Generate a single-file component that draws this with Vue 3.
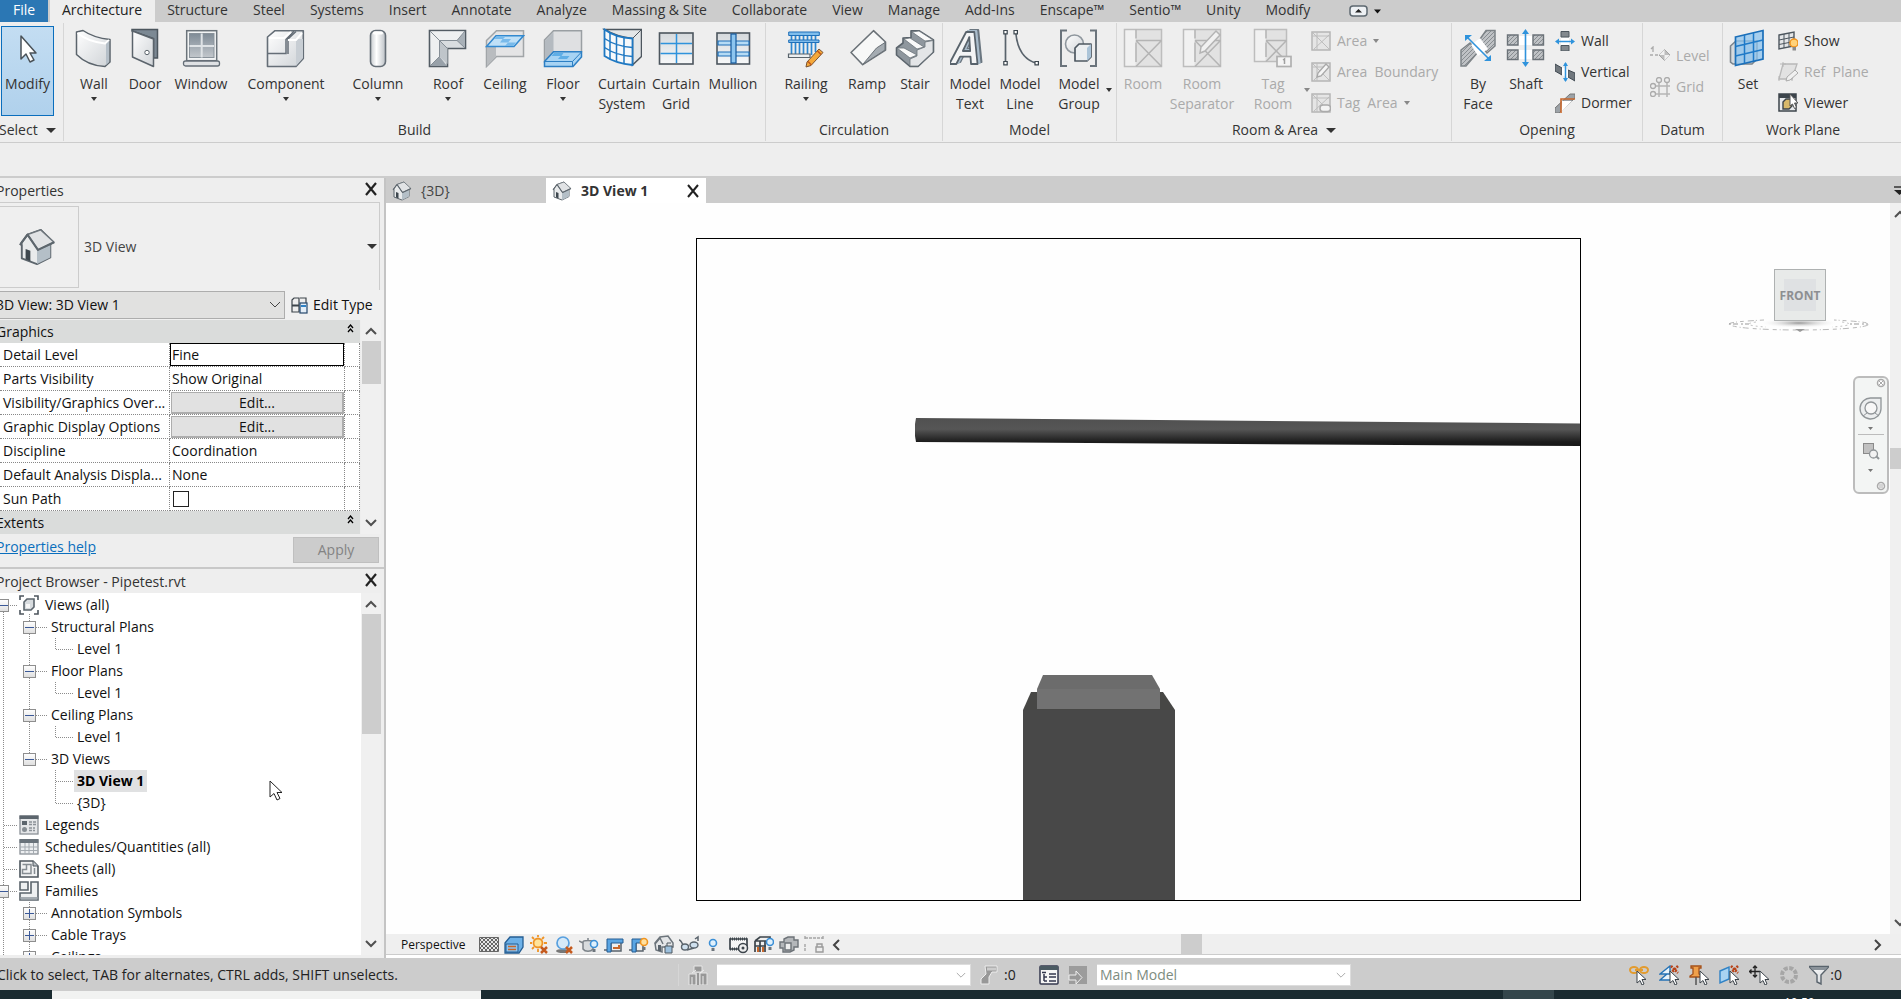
<script setup>
import { ref } from 'vue'

const tabs = ['Architecture', 'Structure', 'Steel', 'Systems', 'Insert', 'Annotate', 'Analyze', 'Massing & Site', 'Collaborate', 'View', 'Manage', 'Add-Ins', 'Enscape™', 'Sentio™', 'Unity', 'Modify']

const pencil = (c1, c2, dk) => `<path d="M33 21l4 3.500-12 13-5 1.500 1-5z" fill="${c1}" stroke="${dk}"/><path d="M31.500 23l3.500 3.500M22 33.500l3.500 3.500" stroke="${c2}" stroke-width="1.500"/>`

const roomBase = (x, y, w) => `<rect x="${x}" y="${y}" width="${w}" height="${w}" fill="#e2e2e2" stroke="#bdbdbd" stroke-width="1.500"/>
<rect x="${x + 1}" y="${y + 1}" width="10" height="${w - 2}" fill="#f1f1f1"/>
<path d="M${x + 11.5} ${y}V${y + 9}M${x + 11.5} ${y + 13}V${w - 3}M${x + 11.5} ${y + 11}H${x + w}M${x + 11.5} ${y + 11}L${x + w} ${y + w}M${x + w} ${y + 11}L${x + 11.5} ${y + w}" fill="none" stroke="#b4b4b4" stroke-width="1.500"/>`

const icons = {
  modify: '<path d="M13 8v23l5-5 4 8 4-2-4-7h6z" fill="#fff" stroke="#4a5258" stroke-width="1.500" stroke-linejoin="round"/>',
  wall: '<path d="M2.500 4L9 2.500C17 8 26 10.500 36 11.500V34L31 38.500C19 38 9 33 2.500 26.500Z" fill="url(#gMetal)" stroke="#5b646c" stroke-width="1.500" stroke-linejoin="round"/><path d="M3.500 5C12 12 21 14.500 31 15.500L35 12" fill="none" stroke="#fff" stroke-width="2"/><path d="M32 16l3-3v21l-3 3z" fill="#b5bfc8"/>',
  door: '<path d="M7 1.500H32.500V30H28.500V10.500L7 3Z" fill="#7c8994" stroke="#4c565e" stroke-width="1.500"/><path d="M7.500 3L28.500 11V38.500L7.500 29Z" fill="url(#gMetal)" stroke="#5b646c" stroke-width="1.500" stroke-linejoin="round"/><circle cx="22" cy="24.500" r="2.200" fill="#fff" stroke="#5b646c"/>',
  window: '<rect x="5.700" y="2.700" width="30" height="30" fill="#f2f4f5" stroke="#6b737a" stroke-width="1.500"/><rect x="8.500" y="5.500" width="24.500" height="24" fill="url(#gGlass)" stroke="#89929a"/><path d="M20.700 5.500V29.500M8.500 18H33" stroke="#dfe3e6" stroke-width="2"/><rect x="2.500" y="33" width="36" height="5" rx="2" fill="#dfe1e4" stroke="#656e77" stroke-width="1.300"/>',
  component: '<path d="M1.500 9L9 2.700H37.300V30.500L30 38.500H1.500Z" fill="url(#gMetal)" stroke="#656e77" stroke-width="1.600" stroke-linejoin="round"/><path d="M30 11h7v19l-7 8z" fill="#c8ced4"/><path d="M1.500 25.500H20V11.500L28 3M22 26V11L30 3.500" fill="none" stroke="#656e77" stroke-width="1.500"/><path d="M3 10H18L25 4M22 12H30L36 5" stroke="#fff" stroke-width="2" fill="none"/>',
  column: '<rect x="12.500" y="2.500" width="15" height="36" rx="5" fill="url(#gCol)" stroke="#656e77" stroke-width="1.600"/><rect x="15" y="3.500" width="10" height="3" rx="1.500" fill="#fff"/>',
  roof: '<path d="M1.500 2.500H37.500V20.500H19.500V38.500H1.500Z" fill="#d9dde0" stroke="#535c64" stroke-width="1.600"/><path d="M2.500 3.500H36L29 12.500H11.500V28.500L3 37Z" fill="#eef0f1"/><path d="M37 3.500V20L29 12.500Z" fill="#a9b1b8"/><path d="M2 38H19L11.500 28.500Z" fill="#98a1a9"/><path d="M11.500 12.500L19.500 20.500V36L11.500 28.500Z" fill="#bfc5ca"/><path d="M2 3L19.500 20.500M11.500 29V12.500H29L37 3M29 12.500l8 7.500M11.500 28.500L2 38" fill="none" stroke="#858e96"/>',
  ceiling: '<path d="M1.500 12.500L11.500 2.700H38.500V28.500H11.500L1.500 38.500Z" fill="#e4e4e5" stroke="#a1a5a8" stroke-width="1.500"/><path d="M2 19L11 10V28.500L2 38Z" fill="#b9bcbf"/><path d="M1.500 18.500L11 7.700H38.500L29 18.500Z" fill="#bfe0f7" stroke="#3289cf" stroke-width="1.500"/><path d="M12 8l-2.500 3h8l-2.500 3.500h8l-3 3.500h8l3-3.500h-8l3-3.500h-8l3-3z" fill="#78baeb"/>',
  floor: '<path d="M1.500 12L10.500 2.700H38.500V24L30 34H1.500Z" fill="#dfe0e2" stroke="#9a9fa3" stroke-width="1.500"/><path d="M2 12.500L10.500 4V25L2 33Z" fill="#b4bac0"/><path d="M1.500 33.500L10.500 23.700H38.500V29L30 38.500H1.500Z" fill="#a7d3f3" stroke="#2c7fc4" stroke-width="1.500"/><path d="M1.500 33.500H29.500L38.500 24M29.500 33.500V38" fill="none" stroke="#2c7fc4"/><path d="M11 25l-2.500 3h9l-2.500 3h9l2.500-3h-8l2-3z" fill="#5faee6"/>',
  cursys: '<path d="M2.500 1.500H39.500V28.500L30.500 37V10.500C20 9.500 10 6 2.500 1.500Z" fill="#e3e6e8" stroke="#4d565e" stroke-width="1.500"/><path d="M2.500 1.500C10 7 20 10 30.500 10.500V37C19 36 10 33 2.500 28Z" fill="#f6f9fb" stroke="#1f78c2" stroke-width="1.800"/><path d="M2.500 10.500C10 15.500 20 19 30.500 19.500M2.500 19.500C10 24.500 20 28 30.500 28.500M8 5V31.500M14.500 8V34M22 10V36" fill="none" stroke="#1f78c2" stroke-width="1.500"/><path d="M31 10L39 2" stroke="#4d565e"/>',
  curgrid: '<rect x="3.500" y="5" width="33.500" height="31" fill="url(#gGrid)" stroke="#4d565e" stroke-width="1.600"/><path d="M20.500 6V35M4.500 15.500H36M4.500 25.500H36" stroke="#2f93dc" stroke-width="1.500"/>',
  mullion: '<rect x="4" y="5" width="32.500" height="31" fill="url(#gGrid)" stroke="#4d565e" stroke-width="1.600"/><path d="M5 13H36V17H5ZM5 24H36V28H5Z" fill="#b5dbf5" stroke="#1f6fb8" stroke-width="1.200"/><rect x="18" y="6" width="5" height="29" fill="#8cc5ef" stroke="#14599c" stroke-width="1.200"/>',
  railing: '<path d="M5.500 5V27M9.500 5V27M13.500 5V27M17.500 5V27M21.500 5V27M25.500 5V27M29.500 5V24" stroke="#2c86cf" stroke-width="1.700"/><path d="M2.700 4H33.300V7.500H2.700ZM2.700 12H33V14.500H2.700Z" fill="#7fbdec" stroke="#1f6fb8"/><path d="M2.500 26H24V29.500H2.500Z" fill="#eceff1" stroke="#59636b" stroke-width="1.200"/>' + pencil('#f5a93a', '#c2571a', '#7a5230'),
  ramp: '<path d="M4 24.500L26.500 2.700L38.500 14V22L15.700 36.700Z" fill="#f7f8f8" stroke="#6b7278" stroke-width="1.600" stroke-linejoin="round"/><path d="M15.700 36.500L29.500 20L38 14.500V22Z" fill="#a5acb2" stroke="#6b7278"/>',
  stair: '<path d="M1.500 20L8 15V10L16 9.500V2.700H24L38.500 12V24L23 38.500H15L1.500 27Z" fill="#8f979e" stroke="#5b646c" stroke-width="1.600" stroke-linejoin="round"/><path d="M2 20H9L22 27L15 30ZM9 11L15 10L29 19L22 21ZM17 4L24 3L38 12L30 13Z" fill="#fafafa" stroke="#6b737a" stroke-width=".8"/><path d="M15 31L22 28V22L30 19V14L38 12.500V24L23 38H15Z" fill="#e3e5e7" stroke="#6b737a" stroke-width=".8"/>',
  mtext: '<text x="2" y="36" filter="url(#extrude)" font-family="Open Sans" font-weight="bold" font-style="italic" font-size="45" fill="#f3f4f5" stroke="#59636c" stroke-width="1.800" stroke-linejoin="round">A</text>',
  mline: '<path d="M5.500 4V35.500M15.700 4C17 20 24 32 37 35.500" fill="none" stroke="#59636c" stroke-width="1.700"/><path d="M3.800 2.500h3.400v3.400H3.800zM3.800 33.500h3.400v3.400H3.800zM14 2.500h3.400v3.400H14zM35 33.500h3.400v3.400H35z" fill="#fff" stroke="#3d474f" stroke-width="1.200"/>',
  mgroup: '<path d="M8 2.500H2V38H8M31 2.500H37V38H31" fill="none" stroke="#6b747c" stroke-width="2"/><circle cx="15.500" cy="16" r="9" fill="url(#gMetal)" stroke="#8f979e" stroke-width="1.600"/><path d="M16 20L20 16H32V29L28 33H16Z" fill="#eceff1" stroke="#4f5962" stroke-width="1.700" stroke-linejoin="round"/><path d="M28 20L32 16V29L28 33Z" fill="#abc4d8"/>',
  room: roomBase(1.5, 1.5, 37),
  roomsep: roomBase(1.5, 1.5, 37) + '<path d="M34 3l4 4-15 16-5 2 1-6z" fill="#f1f1f1" stroke="#b4b4b4" stroke-width="1.500"/>',
  tagroom: roomBase(1.5, 1.5, 32) + '<rect x="24" y="28.500" width="14" height="10" fill="#f4f4f4" stroke="#b0b0b0" stroke-width="1.700"/><path d="M30 32l1.500-1v5" fill="none" stroke="#a0a0a0" stroke-width="1.500"/>',
  byface: '<path d="M3 38V22L12 15L20 24L8 38Z M20 14L28 2.500H37V18L29 25Z" fill="url(#hatch)" stroke="#7e8488" stroke-width="1.500"/><path d="M13 17L22 10L30 21L20 28Z" fill="#fff"/><path d="M9 9L32 32" stroke="#2f93dc" stroke-width="1.600"/><path d="M7 7h7l-7 6zM33 33h-7l7-6z" fill="#2f93dc"/>',
  shaft: '<path d="M1.500 7H12V17H1.500ZM27 7H37.500V17H27ZM1.500 22H12V31.500H1.500ZM27 22H37.500V31.500H27Z" fill="url(#hatch)" stroke="#6b7278" stroke-width="1.400"/><path d="M13 8H26V17H13ZM13 22H26V31H13Z" fill="#fff"/><path d="M19.500 4V36" stroke="#2f93dc" stroke-width="1.600"/><path d="M16 6l3.500-5 3.500 5zM16 34l3.500 5 3.500-5z" fill="#2f93dc"/>',
  set: '<path d="M2.500 18L8 13H29V31L24 36H5L2.500 34Z" fill="#d6dadd" stroke="#7c858d" stroke-width="1.600"/><path d="M7.500 9L35 2.500V31L7.500 37.500Z" fill="#8cc3ee" fill-opacity=".75" stroke="#1b6fb9" stroke-width="1.700"/><path d="M16.500 7V35M25.500 5V33M7.500 18.500L35 12M7.500 28L35 21.500" stroke="#1f7ac8" stroke-width="1.500"/>',
}

const area = '<rect x="1" y="1" width="18" height="18" fill="#e5e5e5" stroke="#b5b5b5" stroke-width="1.500"/><path d="M6 1V19M1 5H19M2 2L18 18M18 4L3 18" stroke="#bdbdbd" fill="none"/>'
const small = {
  area,
  areab: area + '<path d="M15 2l3 3-8 9-4 1 1-4z" fill="#f5f5f5" stroke="#a8a8a8" stroke-width="1.300"/>',
  taga: area + '<rect x="9" y="12" width="10.500" height="6.500" rx="3" fill="#f4f4f4" stroke="#ababab" stroke-width="1.500"/>',
  wall: '<path d="M6 0.500H14V6H6ZM6 14.500H14V20H6Z" fill="#83898e" stroke="#4d565e"/><path d="M6 7H14V14H6Z" fill="#fff"/><path d="M3 10.500H17" stroke="#2f93dc" stroke-width="1.500"/><path d="M4 7.500L0 10.500l4 3zM16 7.500l4 3-4 3z" fill="#2f93dc"/>',
  vertical: '<path d="M0 2L7 6V13L0 9ZM13 8L20 11V19L13 15Z" fill="#70777d" stroke="#3f4850"/><path d="M7 5l6 3v8l-6-3z" fill="#fff"/><path d="M10.500 1V19" stroke="#2f93dc" stroke-width="1.500"/><path d="M8 4l2.500-4L13 4zM8 16l2.500 4 2.500-4z" fill="#2f93dc"/>',
  dormer: '<path d="M0 15L15 1H20V5L4 20H0Z" fill="#9ca2a7" stroke="#777"/><path d="M7 8H17L6 19z" fill="#fff"/><path d="M6 20V6H20" fill="none" stroke="#c8672b" stroke-width="1.600"/>',
  level: '<path d="M1 3l2-2v5M0 9h3M5 9h3" fill="none" stroke="#aaa" stroke-width="1.300"/><path d="M9 9H20" stroke="#bbb"/><path d="M14.500 3.500L20 9l-5.500 5.500L9 9z" fill="#bdbdbd" stroke="#a3a3a3"/><path d="M14.500 3.500V9H9zM14.500 14.500V9H20z" fill="#f1f1f1"/>',
  grid: '<path d="M9 5V20M17 5V20M5 9H20M5 17H20" stroke="#b5b5b5" stroke-width="1.500"/><g fill="#eee" stroke="#ababab" stroke-width="1.300"><circle cx="9" cy="3" r="2.500"/><circle cx="17" cy="3" r="2.500"/><circle cx="3" cy="9" r="2.500"/><circle cx="3" cy="17" r="2.500"/></g>',
  show: '<path d="M1 4L16 1V15L1 18Z" fill="#e4e6e8" stroke="#4d565e" stroke-width="1.400"/><path d="M6 3V17M11 2V16M1 9L16 6M1 13.500L16 10.500" stroke="#4d565e"/><circle cx="16" cy="12" r="4" fill="#ffd27a" stroke="#f0941f" stroke-width="1.500"/><rect x="14.500" y="16" width="3.500" height="3.500" fill="#8a8a8a"/>',
  ref: '<path d="M5 2H19L14 17H1Z" fill="#e2e2e2" stroke="#b8b8b8" stroke-width="1.300"/><path d="M5 0V5M2 2H8M14 13V19M1 14V19" stroke="#b8b8b8"/><path d="M17 8l3 3-8 7-4 1 1-4z" fill="#f0f0f0" stroke="#ababab"/>',
  viewer: '<rect x="1" y="1" width="17" height="17" fill="#e7e9eb" stroke="#3c444b" stroke-width="1.500"/><path d="M1 1H18V5H1Z" fill="#3c444b"/><path d="M5 9L8 6H14V13L11 16H5Z" fill="#d8b96a" stroke="#3c444b" stroke-width="1.400"/><path d="M12 1V13l2.500-2 2 4.500 2-1-2-4.500H20z" fill="#fff" stroke="#555"/>',
}

const house = '<path d="M3.500 15.500L10 7L24 2L36 14L34 17V31L20 38L4 32V18Z" fill="#e9ebec" stroke="#5d666d" stroke-width="2" stroke-linejoin="round"/><path d="M20 23L34 17V31L20 38Z" fill="#b4bfc7"/><path d="M10 7L24 2L38 15L21 23Z" fill="#e1e3e5" stroke="#6f777d" stroke-width="1.600" stroke-linejoin="round"/><path d="M2 18L10 7L21 23L38 15" fill="none" stroke="#5d666d" stroke-width="2.200" stroke-linejoin="round"/><path d="M8 22L13 24V35L8 33Z" fill="#3f484f"/>'

const panels = [
  { id: 'build', title: 'Build', tools: [
    { i: 'wall', t: ['Wall'], d: 1 }, { i: 'door', t: ['Door'] }, { i: 'window', t: ['Window'] }, { i: 'component', t: ['Component'], d: 1 },
    { i: 'column', t: ['Column'], d: 1 }, { i: 'roof', t: ['Roof'], d: 1 }, { i: 'ceiling', t: ['Ceiling'] }, { i: 'floor', t: ['Floor'], d: 1 },
    { i: 'cursys', t: ['Curtain', 'System'] }, { i: 'curgrid', t: ['Curtain', 'Grid'] }, { i: 'mullion', t: ['Mullion'] }] },
  { id: 'circ', title: 'Circulation', tools: [{ i: 'railing', t: ['Railing'], d: 1 }, { i: 'ramp', t: ['Ramp'] }, { i: 'stair', t: ['Stair'] }] },
  { id: 'model', title: 'Model', tools: [{ i: 'mtext', t: ['Model', 'Text'] }, { i: 'mline', t: ['Model', 'Line'] }, { i: 'mgroup', t: ['Model', 'Group'], side: 1 }] },
  { id: 'room', title: 'Room & Area', arrow: 1,
    tools: [{ i: 'room', t: ['Room'], off: 1 }, { i: 'roomsep', t: ['Room', 'Separator'], off: 1 }, { i: 'tagroom', t: ['Tag', 'Room'], off: 1, side: 1 }],
    list: [{ i: 'area', t: 'Area', off: 1, d: 1 }, { i: 'areab', t: 'Area  Boundary', off: 1 }, { i: 'taga', t: 'Tag  Area', off: 1, d: 1 }] },
  { id: 'opening', title: 'Opening', tools: [{ i: 'byface', t: ['By', 'Face'] }, { i: 'shaft', t: ['Shaft'] }],
    list: [{ i: 'wall', t: 'Wall' }, { i: 'vertical', t: 'Vertical' }, { i: 'dormer', t: 'Dormer' }] },
  { id: 'datum', title: 'Datum', tools: [], list: [{ i: 'level', t: 'Level', off: 1 }, { i: 'grid', t: 'Grid', off: 1 }] },
  { id: 'plane', title: 'Work Plane', tools: [{ i: 'set', t: ['Set'] }],
    list: [{ i: 'show', t: 'Show' }, { i: 'ref', t: 'Ref  Plane', off: 1 }, { i: 'viewer', t: 'Viewer' }] },
]

const props = [
  { n: 'Detail Level', v: 'Fine', k: 'input' }, { n: 'Parts Visibility', v: 'Show Original' },
  { n: 'Visibility/Graphics Over...', v: 'Edit...', k: 'button' }, { n: 'Graphic Display Options', v: 'Edit...', k: 'button' },
  { n: 'Discipline', v: 'Coordination' }, { n: 'Default Analysis Displa...', v: 'None' }, { n: 'Sun Path', k: 'check' },
]
const detail = ref('Fine')
const sun = ref(false)

const line = (d) => `<path d="${d}" fill="none" stroke="#8c8c8c" stroke-dasharray="1 1" shape-rendering="crispEdges"/>`
const box = (x, plus) => `<rect x="${x - 6}.500" y="5.500" width="12" height="12" fill="url(#gBox)" stroke="#8e8e8e"/><path d="M${x - 4} 11.500H${x + 5}${plus ? `M${x}.500 7V16` : ''}" stroke="#3b5998" fill="none"/>`
const root = line('M3.500 0V22')
const trunk = root + line('M29.500 0V22')
const parent = trunk + line('M30 11.500H48') + box(29)
const leaf = line('M55.500 0V11.500H74')
const tree = [
  { l: 0, t: 'Views (all)', i: 'views', g: line('M3.500 12V22M4 11.500H18M29.500 20V22') + box(3) },
  { l: 1, t: 'Structural Plans', g: parent }, { l: 2, t: 'Level 1', g: trunk + leaf },
  { l: 1, t: 'Floor Plans', g: parent }, { l: 2, t: 'Level 1', g: trunk + leaf },
  { l: 1, t: 'Ceiling Plans', g: parent }, { l: 2, t: 'Level 1', g: trunk + leaf },
  { l: 1, t: '3D Views', g: root + line('M29.500 0V11.500H48') + box(29) },
  { l: 2, t: '3D View 1', sel: 1, g: root + line('M55.500 0V22M56 11.500H74') }, { l: 2, t: '{3D}', g: root + leaf },
  { l: 0, t: 'Legends', i: 'legends', g: root + line('M4 11.500H18') },
  { l: 0, t: 'Schedules/Quantities (all)', i: 'sched', g: root + line('M4 11.500H18') },
  { l: 0, t: 'Sheets (all)', i: 'sheets', g: root + line('M4 11.500H18') },
  { l: 0, t: 'Families', i: 'families', g: root + line('M4 11.500H18') + box(3) },
  ...['Annotation Symbols', 'Cable Trays', 'Ceilings'].map(t => ({ l: 1, t, g: trunk + line('M30 11.500H48') + box(29, true) })),
]
const treeIcons = {
  views: '<path d="M1 5V1H5M15 1H19V5M19 15V19H15M5 19H1V15" fill="none" stroke="#4d565e" stroke-width="1.600"/><path d="M5 7L8 4H15V12L12 15H5Z" fill="#d8dcdf" stroke="#5b646c" stroke-width="1.600"/><path d="M7 9h4v4H7z" fill="#f7f7f7"/>',
  legends: '<rect x="1" y="1" width="18" height="18" fill="#e4e6e8" stroke="#8b9197" stroke-width="1.300"/><path d="M.500 .500H19.500V4H.500Z" fill="#5c656d"/><path d="M3 6h5v4H3z" fill="#5c656d"/><circle cx="5.500" cy="14.500" r="2.500" fill="#868d93"/><path d="M10 7h7M10 9.500h7M10 13h6M10 15.500h6" stroke="#8b9197" stroke-width="1.300" stroke-dasharray="3 1"/>',
  sched: '<rect x="1" y="3" width="18" height="14" fill="#eceef0" stroke="#8b9197" stroke-width="1.300"/><path d="M.500 2H19.500V6H.500Z" fill="#69727a"/><path d="M6 6V17M10 6V17M14.500 6V17M1 10H19M1 13.500H19" stroke="#a4aab0"/>',
  sheets: '<path d="M1 2H14L19 7V18H1Z" fill="#f1f2f3" stroke="#4d565e" stroke-width="1.600"/><path d="M14 2V7H19" fill="#bcc2c7" stroke="#4d565e"/><path d="M3.500 5.500H12V14.500H3.500V10.500H7.500V5.500M15.500 9V15" fill="none" stroke="#868d93" stroke-width="1.500"/>',
  families: '<path d="M1 1H9V9H1ZM12 1H19V19H1V12H12Z" fill="#eef0f1" stroke="#5b646c" stroke-width="1.600"/><path d="M1.500 16h17v2.500h-17z" fill="#a4abb1"/>',
}

const bulb = (x, y, c = '#3b8fd6', f = '#dff0fc') => `<circle cx="${x}" cy="${y}" r="3.500" fill="${f}" stroke="${c}" stroke-width="1.600"/><path d="M${x - 1.5} ${y + 5}h3v3h-3z" fill="#6d757c"/>`
const redx = '<path d="M12 12l6 6M18 12l-6 6" stroke="#c45a1e" stroke-width="2.500"/>'
const controls = [
  '<path d="M.500 2.500H19.500V16.500H.500Z" fill="url(#check)" stroke="#666"/>',
  '<path d="M1 8L6 2H19V12L15 18H1Z" fill="#6db1e8" stroke="#245d92" stroke-width="1.300"/><path d="M2 9H14V17H2Z" fill="#8fc5f0" stroke="#245d92"/><path d="M4 11.500H12M4 14.500H12" stroke="#c8672b" stroke-width="1.500"/>',
  '<circle cx="9" cy="8" r="4.500" fill="#ffe39a" stroke="#ef9426" stroke-width="1.800"/><path d="M9 0V2M1 8H3M3 2l2 2M15 2l-2 2M3 14l2-2M15 8h3M9 14v3" stroke="#ef9426" stroke-width="1.800"/>' + redx,
  '<ellipse cx="9" cy="16" rx="7" ry="2" fill="#777"/><circle cx="9" cy="8" r="6" fill="#d5e9f9" stroke="#58a0df" stroke-width="1.700"/>' + redx,
  '<path d="M4 7C4 5 14 5 14 7V14C12 17 6 17 4 14ZM4 8L0 6M9 3V5M14 8h3" fill="#d8dbdd" stroke="#7c8389" stroke-width="1.500"/>' + bulb(15, 9),
  '<path d="M0 15H5M7 7H17V16H7z" fill="#eee" stroke="#59636c" stroke-width="1.500"/><path d="M3 17V4H19V8H7V17Z" fill="#5aa5e3" stroke="#245d92"/><path d="M9 13H15V10" stroke="#c8672b" stroke-width="2" fill="none"/>',
  '<path d="M0 15H5M7 7H14V16H7z" fill="#eee" stroke="#59636c" stroke-width="1.500"/><path d="M3 17V4H13V8H7V17Z" fill="#5aa5e3" stroke="#245d92"/>' + bulb(15, 7, '#f0941f', '#ffe0a0'),
  '<path d="M1 8L6 2L14 1L19 8V12H8V17L2 15Z" fill="#e4e6e8" stroke="#6d757c" stroke-width="1.500"/><path d="M1 9L6 3L9 9" fill="none" stroke="#6d757c" stroke-width="1.500"/><path d="M4 10h3v6H4z" fill="#59636c"/><path d="M11 11h7v7h-7z" fill="#9cc0dd" stroke="#4d565e"/><path d="M13 11V8h4" fill="none" stroke="#4d565e"/>',
  '<path d="M0 5C2 5 3 8 4 10M8 15l7-2M16 4l3-2v4" fill="none" stroke="#59636c" stroke-width="1.500"/><ellipse cx="6" cy="12" rx="3.500" ry="3" fill="#cfe0ee" stroke="#59636c" stroke-width="1.400"/><ellipse cx="15" cy="10" rx="4" ry="3" fill="#cfe0ee" stroke="#59636c" stroke-width="1.400"/>',
  bulb(9, 8),
  '<path d="M1 4H18V14H1Z" fill="#f7f7f7" stroke="#3c444b" stroke-width="1.700"/><path d="M1 4H18M1 14H10" stroke="#3c444b" stroke-width="3" stroke-dasharray="1 1"/><circle cx="14" cy="13" r="4.500" fill="#eee" stroke="#3c444b" stroke-width="1.500"/><circle cx="14" cy="13" r="1.500" fill="#3c444b"/>',
  '<path d="M1 6L6 2H16V8M1 6V17M6 6V17M11 6V17M1 6H12M1 11H12" fill="none" stroke="#3c444b" stroke-width="1.700"/><path d="M4 12V17M9 12v5" stroke="#c8672b" stroke-width="2"/>' + bulb(16, 7),
  '<path d="M1 7H5V4L9 2H15V5H19V12H15V15L11 17H4V13H1Z" fill="#b4b7ba" stroke="#6d7378" stroke-width="1.400"/><path d="M6 8H12V15H6Z" fill="#eee" stroke="#6d7378" stroke-width="1.400"/>',
  '<path d="M1 3H19M1 1V5M19 1V5M1 9V16" fill="none" stroke="#a5a5a5" stroke-width="1.400" stroke-dasharray="3 1"/><path d="M12 12H19V17H12ZM13 12V9H18V12" fill="#eee" stroke="#9b9b9b" stroke-width="1.400"/>',
]

const cur = '<path d="M11 6V18l3-2.500 2 4.500 2-1-2-4.500h4z" fill="#fff" stroke="#3c444b"/>'
const rx = '<path d="M12 1l7 7M19 1l-7 7" stroke="#b8441a" stroke-width="2.500" stroke-dasharray="2 1"/>'
const selIcons = [
  '<path d="M1 5a4 3 0 0 1 8 0a4 3 0 0 1-8 0M11 5a4 3 0 0 1 8 0a4 3 0 0 1-8 0M6 5h8" fill="none" stroke="#e39b2d" stroke-width="2"/><path d="M8 6V18l3-2.500 2 4.500 2-1-2-4.500h4z" fill="#fff" stroke="#3c444b"/>',
  '<path d="M1 9L11 1V9ZM1 15L8 9H13V15Z" fill="#e8f3fb" stroke="#2472b5" stroke-width="1.400"/>' + rx + cur,
  '<path d="M2 1H12V3H10V9L13 11V12H1V11L4 9V3H2Z" fill="#f0a04a" stroke="#a4501a" stroke-width="1.300"/><path d="M7 12V20" stroke="#555" stroke-width="1.500"/>' + cur,
  '<path d="M1 6L10 2V14L1 18Z" fill="#a8d3f2" stroke="#2f82c6" stroke-width="1.400"/>' + rx + cur,
  '<path d="M6 1V12M1 6.500H11M4 3l2-2 2 2M4 10l2 2 2-2M2.500 4.500l-2 2 2 2" fill="none" stroke="#222" stroke-width="1.300"/>' + cur,
  '<circle cx="10" cy="10" r="7" fill="none" stroke="#a6a6a6" stroke-width="4" stroke-dasharray="4 1.500"/>',
]
const peopleIcon = '<path d="M6 1h8v6H6zM1 9h7v11H1zM12 8h7v12h-7z" fill="#989898" stroke="#e6e6e6"/><path d="M9 8h2v12H9z" fill="#989898"/><path d="M4 8L8 5M12 8l4-3M4 12v8M15 11v9" stroke="#eee"/>'
</script>

<template>
  <div class="app">
    <svg class="defs" width="0" height="0" aria-hidden="true">
      <defs>
        <linearGradient id="gMetal" x1="0" y1="0" x2="1" y2="1"><stop offset="0" stop-color="#fff" /><stop offset="1" stop-color="#cfd3d7" /></linearGradient>
        <linearGradient id="gGlass" x1="0" y1="0" x2="0" y2="1"><stop offset="0" stop-color="#7f8b96" /><stop offset="1" stop-color="#c2c7cc" /></linearGradient>
        <linearGradient id="gCol"><stop offset="0" stop-color="#c7cbcf" /><stop offset=".4" stop-color="#fff" /><stop offset="1" stop-color="#bcc1c6" /></linearGradient>
        <linearGradient id="gGrid" x1="0" y1="0" x2="0" y2="1"><stop offset="0" stop-color="#d5d9dc" /><stop offset="1" stop-color="#f7f8f9" /></linearGradient>
        <linearGradient id="gBox" x1="0" y1="0" x2="0" y2="1"><stop offset="0" stop-color="#fff" /><stop offset="1" stop-color="#dedede" /></linearGradient>
        <linearGradient id="gPipe" x1="0" y1="0" x2="0" y2="1"><stop offset="0" stop-color="#505050" /><stop offset=".4" stop-color="#565656" /><stop offset=".85" stop-color="#1c1c1c" /><stop offset="1" stop-color="#161616" /></linearGradient>
        <filter id="extrude"><feDropShadow dx="2" dy="-1" stdDeviation="0" flood-color="#a9bccb" /><feDropShadow dx="2" dy="-1" stdDeviation="0" flood-color="#6b7680" /></filter>
        <pattern id="hatch" width="4" height="4" patternUnits="userSpaceOnUse"><rect width="4" height="4" fill="#bfc2c5" /><path d="M0 4L4 0" stroke="#888d91" /></pattern>
        <pattern id="check" width="4" height="4" patternUnits="userSpaceOnUse"><rect width="4" height="4" fill="#e6e6e6" /><path d="M0 0h2v2H0zM2 2h2v2H2z" fill="#666" /></pattern>
      </defs>
    </svg>

    <nav class="tabs">
      <button class="file">File</button>
      <button v-for="(t, n) in tabs" :key="t" class="tab" :class="{ on: n === 0 }">{{ t }}</button>
      <button class="toggle" aria-label="Minimize ribbon">
        <svg width="32" height="12" viewBox="0 0 32 12"><rect x="1" y="1" width="17" height="10" rx="3" fill="#eef1f4" stroke="#5d6870" stroke-width="1.500" /><path d="M6 7.500h7L9.500 4z" fill="#222" /><path d="M25 4.500h7l-3.500 4z" fill="#111" /></svg>
      </button>
    </nav>

    <header class="ribbon">
      <section class="panel select">
        <div class="tools">
          <button class="tool modify"><svg class="ico" viewBox="0 0 40 40" v-html="icons.modify" /><span>Modify</span></button>
        </div>
        <h2>Select <i class="tri big" /></h2>
      </section>
      <section v-for="p in panels" :key="p.id" class="panel" :class="p.id">
        <div class="tools">
          <button v-for="b in p.tools" :key="b.i" class="tool" :class="{ off: b.off }">
            <svg class="ico" viewBox="0 0 40 40" v-html="icons[b.i]" />
            <span v-for="w in b.t" :key="w">{{ w }}</span>
            <i v-if="b.d" class="tri" />
            <i v-if="b.side" class="tri side" />
          </button>
          <div v-if="p.list" class="list">
            <button v-for="b in p.list" :key="b.t" class="row" :class="{ off: b.off }">
              <svg width="20" height="20" viewBox="0 0 20 20" v-html="small[b.i]" /><span>{{ b.t }}</span><i v-if="b.d" class="tri" />
            </button>
          </div>
        </div>
        <h2>{{ p.title }} <i v-if="p.arrow" class="tri big" /></h2>
      </section>
    </header>

    <main class="work">
      <aside class="dock">
        <section class="properties">
          <div class="head"><h3>Properties</h3>
            <button class="x" aria-label="Close properties"><svg width="14" height="14" viewBox="0 0 14 14"><path d="M2 1l10 12M12 1L2 13" stroke="#222" stroke-width="2.200" /></svg></button>
          </div>
          <div class="type">
            <div class="thumb"><svg width="38" height="38" viewBox="0 0 40 40" v-html="house" /></div>
            <span>3D View</span><i class="tri big" />
          </div>
          <div class="inst">
            <div class="combo">
              <select aria-label="Instance"><option>3D View: 3D View 1</option></select>
              <svg class="chev" width="12" height="8" viewBox="0 0 12 8"><path d="M1 1l5 5 5-5" fill="none" stroke="#444" /></svg>
            </div>
            <button class="edit-type"><svg width="17" height="17" viewBox="0 0 17 17"><path d="M1 3L3 1H8V8H1ZM9 1H15V8H9M1 9H8V15H1Z" fill="#eee" stroke="#3c444b" stroke-width="1.200" /><rect x="9" y="6" width="7" height="10" fill="#e4eef7" stroke="#24476b" stroke-width="1.200" /><path d="M10 9h5" stroke="#2f82c6" stroke-width="2" /></svg>Edit Type</button>
          </div>
          <div class="grid-wrap">
            <div class="grid">
              <div class="group">Graphics <svg width="7" height="9" viewBox="0 0 7 9"><path d="M1 4l2.500-3L6 4M1 8l2.500-3L6 8" fill="none" stroke="#000" stroke-width="1.300" /></svg></div>
              <table>
                <tbody>
                  <tr v-for="r in props" :key="r.n">
                    <th scope="row">{{ r.n }}</th>
                    <td :class="{ edit: r.k }">
                      <input v-if="r.k === 'input'" v-model="detail" type="text" :aria-label="r.n">
                      <button v-else-if="r.k === 'button'" :aria-label="r.n">{{ r.v }}</button>
                      <input v-else-if="r.k === 'check'" v-model="sun" type="checkbox" :aria-label="r.n">
                      <template v-else>{{ r.v }}</template>
                    </td>
                    <td class="end" />
                  </tr>
                </tbody>
              </table>
              <div class="group last">Extents <svg width="7" height="9" viewBox="0 0 7 9"><path d="M1 4l2.500-3L6 4M1 8l2.500-3L6 8" fill="none" stroke="#000" stroke-width="1.300" /></svg></div>
            </div>
            <div class="vbar">
              <svg width="12" height="8" viewBox="0 0 12 8"><path d="M1 7l5-5 5 5" fill="none" stroke="#505050" stroke-width="2" /></svg>
              <div class="thumb-v" />
              <svg width="12" height="8" viewBox="0 0 12 8"><path d="M1 1l5 5 5-5" fill="none" stroke="#505050" stroke-width="2" /></svg>
            </div>
          </div>
          <div class="foot"><a href="#help">Properties help</a><button disabled>Apply</button></div>
        </section>

        <section class="browser">
          <div class="head"><h3>Project Browser - Pipetest.rvt</h3>
            <button class="x" aria-label="Close browser"><svg width="14" height="14" viewBox="0 0 14 14"><path d="M2 1l10 12M12 1L2 13" stroke="#222" stroke-width="2.200" /></svg></button>
          </div>
          <div class="tree-wrap">
            <ul class="tree">
              <li v-for="(r, n) in tree" :key="n" :class="['l' + r.l, { sel: r.sel }]">
                <svg class="gutter" width="76" height="22" v-html="r.g" />
                <svg v-if="r.i" class="ti" width="20" height="20" viewBox="0 0 20 20" v-html="treeIcons[r.i]" />
                <span>{{ r.t }}</span>
              </li>
            </ul>
            <div class="vbar long">
              <svg width="12" height="8" viewBox="0 0 12 8"><path d="M1 7l5-5 5 5" fill="none" stroke="#505050" stroke-width="2" /></svg>
              <div class="thumb-v" />
              <svg width="12" height="8" viewBox="0 0 12 8"><path d="M1 1l5 5 5-5" fill="none" stroke="#505050" stroke-width="2" /></svg>
            </div>
          </div>
          <svg class="pointer" width="14" height="22" viewBox="0 0 14 22"><path d="M1 1V17l4-3.500 3 6.500 3-1.500-3-6h5z" fill="#fff" stroke="#222" /></svg>
        </section>
      </aside>

      <section class="view">
        <div class="vtabs">
          <button class="vtab"><svg width="20" height="20" viewBox="0 0 40 40" v-html="house" /><span>{3D}</span></button>
          <button class="vtab on"><svg width="20" height="20" viewBox="0 0 40 40" v-html="house" /><span>3D View 1</span>
            <svg class="vx" width="14" height="14" viewBox="0 0 14 14"><path d="M2 1l10 12M12 1L2 13" stroke="#222" stroke-width="2" /></svg></button>
          <svg class="more" width="8" height="12" viewBox="0 0 8 12"><path d="M1 2H8" stroke="#333" stroke-width="1.500" /><path d="M1 5h11L6.500 10z" fill="#222" /></svg>
        </div>
        <div class="canvas-row">
          <div class="canvas">
            <svg class="scene" width="885" height="663" viewBox="0 0 885 663">
              <path d="M220 180L884 185.500V208L220 204L219 198V186Z" fill="url(#gPipe)" />
              <path d="M335 454H467L479 472V662H327V472Z" fill="#474745" />
              <path d="M327 472H479V662H327Z" fill="#484848" />
              <path d="M347 437H456L464 451H341Z" fill="#6c6c6c" />
              <path d="M341 451H464V471H341Z" fill="#727272" />
              <rect x=".5" y=".5" width="884" height="662" fill="none" stroke="#000" />
            </svg>
            <svg class="cube" width="146" height="68" viewBox="0 0 146 68">
              <defs><radialGradient id="gSh"><stop offset="0" stop-color="#999" /><stop offset="1" stop-color="#fff" stop-opacity="0" /></radialGradient></defs>
              <path d="M38 52C20 53 4 54 3 56C4 60 40 62 73 62S142 60 143 56C142 54 126 53 108 52" fill="none" stroke="#b8b8b8" stroke-dasharray="4 3 1 2 6 4" />
              <path d="M30 54C16 56 24 58 40 59M116 54C130 56 122 58 106 59" fill="none" stroke="#c4c4c4" stroke-dasharray="2 3" />
              <path d="M3 56h20M124 56h18" stroke="#999" stroke-dasharray="2 2 5 3" />
              <path d="M69 61l5 3 5-3z" fill="#999" />
              <ellipse cx="73" cy="55" rx="40" ry="5" fill="url(#gSh)" />
              <rect x="48.500" y="1.500" width="51" height="51" fill="#e8eae9" stroke="#aeb1b1" />
              <rect x="58" y="11" width="32" height="32" fill="#dfe1e3" />
              <text x="74" y="32" text-anchor="middle">FRONT</text>
            </svg>
            <svg class="navbar" width="36" height="118" viewBox="0 0 36 118">
              <rect x="1" y="1" width="34" height="116" rx="5" fill="#f3f5f4" stroke="#bcbcbc" stroke-width="2" />
              <circle cx="28" cy="7" r="3.500" fill="#fff" stroke="#aaa" stroke-width="1.500" /><path d="M26 5l4 4M30 5l-4 4" stroke="#aaa" />
              <path d="M18 22H28V33a10.500 10.500 0 1 1-10-11Z" fill="#eceeef" stroke="#909598" stroke-width="1.300" /><circle cx="18" cy="32" r="6" fill="#f7f7f7" stroke="#909598" stroke-width="1.300" /><path d="M14 37l-4 3M22 37l4 3" stroke="#909598" />
              <path d="M15 51h5l-2.500 3zM15 93h5l-2.500 3z" fill="#777" /><path d="M5 58.500H31" stroke="#bcbcbc" />
              <rect x="10.500" y="67.500" width="10" height="10" fill="#c1c1c1" stroke="#8a8a8a" /><circle cx="20.500" cy="78" r="4" fill="#f2f2f2" stroke="#909598" stroke-width="1.300" /><path d="M23 80l3 3" stroke="#909598" stroke-width="2" />
              <circle cx="28" cy="110" r="3.500" fill="#fff" stroke="#aaa" stroke-width="1.500" /><path d="M25.500 109h5M26 111h4" stroke="#aaa" />
            </svg>
          </div>
          <div class="vbar edge">
            <svg width="12" height="8" viewBox="0 0 12 8"><path d="M1 7l5-5 5 5" fill="none" stroke="#505050" stroke-width="2" /></svg>
            <div class="thumb-v" />
            <svg width="12" height="8" viewBox="0 0 12 8"><path d="M1 1l5 5 5-5" fill="none" stroke="#505050" stroke-width="2" /></svg>
          </div>
        </div>
        <div class="controls">
          <span>Perspective</span>
          <div class="cicons">
            <button v-for="(c, n) in controls" :key="n" :aria-label="'View control ' + (n + 1)"><svg width="20" height="20" viewBox="0 0 20 20" v-html="c" /></button>
          </div>
          <div class="hbar">
            <svg width="8" height="12" viewBox="0 0 8 12"><path d="M7 1L2 6l5 5" fill="none" stroke="#444" stroke-width="2" /></svg>
            <div class="thumb-h" />
            <svg width="8" height="12" viewBox="0 0 8 12"><path d="M1 1l5 5-5 5" fill="none" stroke="#444" stroke-width="2" /></svg>
          </div>
        </div>
      </section>
    </main>

    <footer class="status">
      <p>Click to select, TAB for alternates, CTRL adds, SHIFT unselects.</p>
      <div class="mid">
        <svg width="20" height="20" viewBox="0 0 20 20" v-html="peopleIcon" />
        <div class="combo s"><select aria-label="Active workset" disabled><option /></select><svg class="chev" width="10" height="7" viewBox="0 0 12 8"><path d="M1 1l5 5 5-5" fill="none" stroke="#999" /></svg></div>
        <div class="count"><svg width="18" height="20" viewBox="0 0 18 20"><path d="M5 1H17V7H12L9 12V19H1V14L6 9Z" fill="#989898" stroke="#eee" /><path d="M7 2.500h9v3H7z" fill="#ccc" /></svg><span>:0</span></div>
        <svg width="20" height="20" viewBox="0 0 20 20"><rect x="1" y="1" width="18" height="18" rx="1" fill="#f5f5f5" stroke="#33374d" stroke-width="1.500" /><path d="M1 1H19V5H1Z" fill="#4a5a62" /><path d="M3 7.500h4M10 9h7M5 9v7M5 12h3M10 12h7M5 16h3M10 16h7" stroke="#33374d" stroke-width="1.500" fill="none" /></svg>
        <svg width="20" height="20" viewBox="0 0 20 20"><path d="M1 1H19V19H1Z" fill="#9c9c9c" /><path d="M1 10H8V6l6 6.500L8 19v-4H1Z" fill="#989898" stroke="#eee" /></svg>
        <div class="combo s"><select aria-label="Design option" disabled><option>Main Model</option></select><svg class="chev" width="10" height="7" viewBox="0 0 12 8"><path d="M1 1l5 5 5-5" fill="none" stroke="#999" /></svg></div>
      </div>
      <div class="sel-icons">
        <button v-for="(s, n) in selIcons" :key="n" :aria-label="'Selection option ' + (n + 1)"><svg width="20" height="20" viewBox="0 0 20 20" v-html="s" /></button>
        <svg width="20" height="20" viewBox="0 0 20 20"><path d="M0 1.500H20L12 10V19L8 17V10Z" fill="url(#gMetal)" stroke="#59636c" stroke-width="1.400" /><path d="M1 2h18l-3 3H4z" fill="#8a9299" /></svg><span>:0</span>
      </div>
    </footer>
    <div class="taskbar"><div class="search" /><div class="active" /><time>10:50</time></div>
  </div>
</template>

<style>
body { margin: 0; overflow: hidden; }
</style>

<style scoped>
.app { display: grid; grid-template-rows: 22px 121px 33px 1fr 32px 9px; grid-template-columns: 100%; height: 100vh; overflow: hidden; background: #eee; color: #333; font-family: "Open Sans", "Noto Sans", sans-serif; font-size: 14px; line-height: 20px; }
.app * { box-sizing: border-box; }
.defs { position: absolute; }
button { font: inherit; color: inherit; background: none; border: 0; padding: 0; margin: 0; }
h2, h3, p, ul { margin: 0; padding: 0; font: inherit; font-weight: 400; list-style: none; }
svg { display: block; flex: none; }

.tabs { display: flex; background: #ccc; grid-row: 1; overflow: hidden; }
.tabs button { height: 22px; line-height: 20px; padding: 0 13px 2px 12px; white-space: nowrap; flex: none; }
.tabs .file { background: #2b77b4; color: #fff; width: 48px; margin-right: 2px; text-align: center; padding: 0 8px 2px; }
.tabs .on { background: #eee; color: #222; }
.tabs .toggle { margin-left: 24px; padding: 4px 2px; }

.ribbon { grid-row: 2; display: flex; padding-top: 1px; border-bottom: 1px solid #ccc; }
.panel { display: flex; flex-direction: column; border-right: 1px solid #d6d6d6; height: 118px; flex: none; }
.tools { display: grid; grid-auto-flow: column; justify-content: start; height: 97px; padding-top: 3px; }
.select { width: 64px; }
.build .tools { grid-template-columns: 56px 46px 66px 104px 80px 60px 54px 62px 56px 52px 62px; padding-left: 2px; padding-right: 1px; }
.circ .tools { grid-template-columns: 74px 48px 48px; padding: 3px 3px 0 3px; }
.model .tools { grid-template-columns: 50px 50px 68px; padding: 3px 3px 0 2px; }
.room .tools { grid-template-columns: 52px 66px 76px 139px; padding-left: 0; padding-right: 1px; }
.opening .tools { grid-template-columns: 48px 48px 90px; padding: 3px 2px 0; }
.datum .tools { grid-template-columns: 79px; }
.plane .tools { grid-template-columns: 50px 110px; }
.plane { border-right: 0; }
.tool { position: relative; display: flex; flex-direction: column; align-items: center; padding-top: 2px; white-space: nowrap; }
.ico { width: 40px; height: 40px; margin-bottom: 6px; }
.off { color: #aaa; }
.modify { width: 53px; height: 90px; margin-left: 1px; border: 1px solid #0a6ebd; background: linear-gradient(#c3ddf2, #b0d1ec); padding-top: 1px; }
.panel h2 { text-align: center; line-height: 20px; display: flex; justify-content: center; align-items: center; gap: 8px; }
.select h2 { justify-content: flex-start; margin-left: -1px; }
.tri { width: 0; height: 0; border: 3px solid transparent; border-top: 4px solid #333; border-bottom: 0; flex: none; }
.tri.big { border-left-width: 5px; border-right-width: 5px; border-top-width: 5px; }
.off .tri { border-top-color: #888; }
.tool > .tri { margin-top: 3px; }
.tool > .side { position: absolute; right: 1px; top: 62px; margin: 0; }
.list { display: flex; flex-direction: column; margin-top: -1px; }
.list .row { display: flex; align-items: center; gap: 6px; height: 31px; white-space: pre; }
.opening .list { padding-left: 5px; }
.datum .list { padding: 15px 0 0 7px; }
.plane .list { padding-left: 5px; }

.work { grid-row: 4; display: flex; min-height: 0; border-top: 2px solid #ccc; }
.dock { width: 386px; flex: none; display: flex; flex-direction: column; border-right: 2px solid #c4c4c4; min-height: 0; color: #111; }
.head { display: flex; align-items: center; justify-content: space-between; height: 24px; padding: 1px 6px 0 0; color: #333; }
.head h3 { margin-left: -4px; }
.head .x { width: 14px; margin-top: -3px; }
.type { display: flex; align-items: center; height: 88px; margin-right: 4px; padding-right: 2px; border: solid #ccc; border-width: 1px 1px 0 0; color: #444; background: #efefef; }
.type .thumb { width: 79px; height: 82px; border: 1px solid #ccc; border-left: 0; display: grid; place-items: center; margin-right: 5px; padding-right: 4px; }
.type span { flex: 1; }
.inst { display: flex; align-items: center; height: 30px; background: #f0f0f0; }
.combo { position: relative; }
.combo select { appearance: none; font: inherit; color: #111; width: 100%; height: 100%; border: 1px solid #adadad; border-left: 0; border-radius: 0; background: #e1e1e0; padding: 0; text-indent: -4px; }
.combo .chev { position: absolute; right: 4px; top: 10px; }
.inst .combo { width: 285px; height: 28px; }
.edit-type { display: flex; align-items: center; gap: 5px; margin-left: 6px; }
.grid-wrap { display: flex; height: 214px; }
.grid { width: 360px; background: #fff; overflow: hidden; }
.group { height: 23px; background: #dadcdb; display: flex; justify-content: space-between; padding: 0 6px 0 0; text-indent: -4px; align-items: center; }
.group svg { margin-bottom: 6px; }
table { border-collapse: separate; border-spacing: 0; width: 360px; table-layout: fixed; }
tr { height: 24px; }
th, td { padding: 0 0 0 2px; height: 24px; font-weight: 400; text-align: left; border: dotted #888; border-width: 0 1px 1px 0; line-height: 20px; white-space: nowrap; overflow: hidden; }
th { width: 170px; padding-left: 3px; }
.end { width: 15px; }
.edit { padding: 0; }
td input[type="text"] { display: block; width: 174px; height: 23px; border: 1px solid #000; padding: 0 1px; font: inherit; color: #111; border-radius: 0; background: #fff; }
td button { display: block; width: 173px; height: 22px; margin: 1px 0 0 1px; background: #e1e1e1; border: 1px solid #adadad; border-width: 1px 2px 2px 1px; line-height: 19px; }
td input[type="checkbox"] { appearance: none; display: block; width: 16px; height: 16px; margin: 0 0 0 3px; border: 1px solid #222; background: #fff; }
.vbar { width: 20px; margin-left: 1px; display: flex; flex-direction: column; align-items: center; justify-content: space-between; padding: 7px 0; background: #f0f0f0; }
.thumb-v { width: 19px; height: 43px; background: #cdcdcd; margin: 6px 0 auto; }
.foot { display: flex; justify-content: space-between; align-items: center; padding: 2px 5px 4px 0; height: 33px; }
.foot a { color: #0a6ebd; margin: -6px 0 0 -4px; }
.foot button { width: 86px; height: 26px; border: 1px solid #bfbfbf; background: #ccc; color: #838383; }
.browser { position: relative; flex: 1; display: flex; flex-direction: column; min-height: 0; border-top: 2px solid #c8c8c8; border-bottom: 3px solid #eee; }
.tree-wrap { display: flex; flex: 1; min-height: 0; }
.tree { flex: 1; background: #fff; overflow: hidden; padding-top: 1px; }
.tree li { position: relative; height: 22px; line-height: 22px; display: flex; align-items: center; }
.gutter { position: absolute; left: 0; top: 0; }
.ti { margin: 0 6px 0 19px; z-index: 1; }
.l1 { padding-left: 51px; }
.l2 { padding-left: 74px; }
.l2 span { padding: 0 3px; z-index: 1; }
.sel span { font-weight: 700; background: #e0e1e2; color: #000; }
.long { margin: 0 3px 0 0; }
.long .thumb-v { height: 120px; }
.pointer { position: absolute; left: 269px; top: 211px; }

.view { flex: 1; min-width: 0; display: flex; flex-direction: column; background: #fff; }
.vtabs { display: flex; background: #ccc; height: 25px; }
.vtab { display: flex; align-items: center; gap: 9px; width: 160px; padding: 0 6px; color: #444; }
.vtab.on { background: #fff; font-weight: 700; color: #333; }
.vx { margin-left: auto; }
.more { margin: 7px 0 0 auto; }
.canvas-row { flex: 1; display: flex; min-height: 0; }
.canvas { position: relative; flex: 1; display: flex; align-items: center; justify-content: center; background: #fefefe; min-width: 0; padding-top: 2px; }
.cube { position: absolute; right: 18px; top: 65px; }
.cube text { font-size: 12px; font-weight: 700; fill: #8d8f92; }
.navbar { position: absolute; right: 1px; top: 173px; }
.edge { width: 11px; margin: 0; align-items: flex-start; overflow: hidden; padding-left: 4px; }
.edge .thumb-v { width: 11px; height: 21px; margin: 230px 0 auto -4px; }
.controls { display: flex; align-items: center; height: 24px; background: #efefef; border-bottom: 3px solid #fff; box-shadow: inset 0 -1px #ccc; color: #111; font-size: 12px; padding-left: 15px; }
.controls > span { width: 78px; }
.cicons { display: flex; gap: 5px; }
.hbar { flex: 1; display: flex; align-items: center; padding: 0 19px 0 8px; }
.thumb-h { width: 21px; height: 21px; background: #cdcdcd; margin: 0 auto 0 341px; }

.status { grid-row: 5; display: flex; align-items: center; background: #ccc; color: #222; padding-top: 1px; }
.status p { width: 681px; margin-left: -3px; white-space: nowrap; flex: none; }
.mid { display: flex; align-items: center; gap: 9px; border-left: 1px solid #d6d6d6; padding-left: 9px; }
.s { width: 254px; height: 22px; }
.s select { background: #fff; border-color: #ddd; text-indent: 3px; color: #7d8c80; opacity: 1; }
.s .chev { top: 8px; right: 5px; }
.count { display: flex; align-items: center; gap: 6px; width: 50px; }
.sel-icons { margin-left: auto; display: flex; align-items: center; gap: 10px; padding-right: 59px; }
.sel-icons span { margin-left: -9px; }
.taskbar { grid-row: 6; display: flex; background: #1a2b30; overflow: hidden; padding-left: 52px; color: #fff; }
.search { width: 429px; background: #f1f2f1; border-top: 1px solid #ccc; }
.active { width: 51px; margin-left: 1022px; background: #34464b; }
.taskbar time { margin-left: 230px; margin-top: 3px; font-size: 12px; }
</style>
